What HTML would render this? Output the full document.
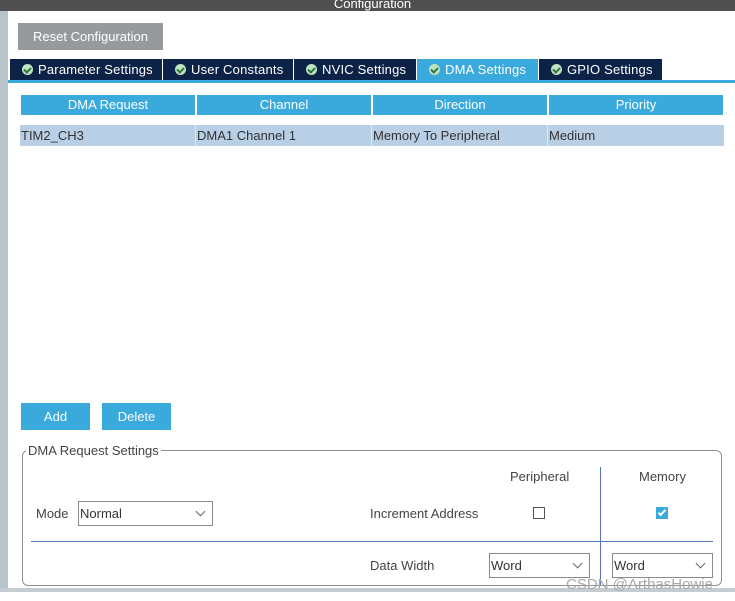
<!DOCTYPE html>
<html><head><style>
*{box-sizing:border-box;margin:0;padding:0}
body{width:735px;height:601px;background:#fff;position:relative;overflow:hidden;font-family:"Liberation Sans",Arial,sans-serif;font-size:13px;color:#333}
.a{position:absolute}
.tab{position:absolute;top:59px;height:21px;background:#0c2347;color:#fff;line-height:21px;padding-left:28px;font-size:13px;letter-spacing:.2px}
.tab i{position:absolute;left:12px;top:5px;width:11px;height:11px;border-radius:50%;background:#bfe3c0}
.tab i:after{content:"";position:absolute;left:3px;top:2px;width:3px;height:5px;border:solid #2a7a40;border-width:0 2px 2px 0;transform:rotate(45deg)}
.th{position:absolute;top:95px;height:20px;background:#3aa9dc;color:#fff;text-align:center;line-height:20px}
.td{position:absolute;top:125px;height:20px;line-height:21px;color:#333;padding-left:0}
.btn{position:absolute;top:403px;height:27px;background:#3aa9dc;color:#fff;text-align:center;line-height:27px}
.sel{position:absolute;height:25px;border:1px solid #8a8a8a;background:#fff;line-height:24px;padding-left:1px;color:#333}
.sel:after{content:"";position:absolute;right:8px;top:6px;width:6px;height:6px;border:solid #666;border-width:0 1px 1px 0;transform:rotate(45deg)}
</style></head><body>
<div class="a" style="left:0;top:0;width:8px;height:592px;background:#b9c3ca"></div>
<div class="a" style="left:0;top:0;width:735px;height:11px;background:#505050;color:#fff;text-align:center;line-height:8px;font-size:13px;overflow:hidden;padding-left:10px">Configuration</div>
<div class="a" style="left:0;top:588px;width:735px;height:4px;background:#c5cbd0"></div>
<div class="a" style="left:18px;top:23px;width:145px;height:27px;background:#979a9d;color:#fff;line-height:27px;text-align:center">Reset Configuration</div>
<div class="tab" style="left:10px;width:152px"><i></i>Parameter Settings</div>
<div class="tab" style="left:163px;width:130px"><i></i>User Constants</div>
<div class="tab" style="left:294px;width:122px"><i></i>NVIC Settings</div>
<div class="tab" style="left:417px;width:121px;background:#3aa9dc"><i></i>DMA Settings</div>
<div class="tab" style="left:539px;width:123px"><i></i>GPIO Settings</div>
<div class="a" style="left:8px;top:80px;width:727px;height:3px;background:#3aa9dc"></div>
<div class="th" style="left:21px;width:174px">DMA Request</div>
<div class="th" style="left:197px;width:174px">Channel</div>
<div class="th" style="left:373px;width:174px">Direction</div>
<div class="th" style="left:549px;width:174px">Priority</div>
<div class="a" style="left:20px;top:125px;width:704px;height:21px;background:#b8cfe6"></div>
<div class="a" style="left:195px;top:125px;width:1px;height:21px;background:#e0e8f2"></div>
<div class="a" style="left:371px;top:125px;width:1px;height:21px;background:#e0e8f2"></div>
<div class="a" style="left:547px;top:125px;width:1px;height:21px;background:#e0e8f2"></div>
<div class="td" style="left:21px">TIM2_CH3</div>
<div class="td" style="left:197px">DMA1 Channel 1</div>
<div class="td" style="left:373px">Memory To Peripheral</div>
<div class="td" style="left:549px">Medium</div>
<div class="btn" style="left:21px;width:69px">Add</div>
<div class="btn" style="left:102px;width:69px">Delete</div>
<div class="a" style="left:22px;top:450px;width:700px;height:136px;border:1px solid #8f8f8f;border-radius:6px"></div>
<div class="a" style="left:26px;top:443px;background:#fff;padding:0 2px;line-height:16px;color:#444">DMA Request Settings</div>
<div class="a" style="left:600px;top:467px;width:1px;height:118px;background:#5577bb"></div>
<div class="a" style="left:31px;top:541px;width:682px;height:1px;background:#5577bb"></div>
<div class="a" style="left:510px;top:469px;color:#444">Peripheral</div>
<div class="a" style="left:639px;top:469px;color:#444">Memory</div>
<div class="a" style="left:36px;top:506px;color:#444">Mode</div>
<div class="sel" style="left:78px;top:501px;width:135px">Normal</div>
<div class="a" style="left:370px;top:506px;color:#444">Increment Address</div>
<div class="a" style="left:533px;top:507px;width:12px;height:12px;border:1px solid #555;background:#fff"></div>
<div class="a" style="left:656px;top:507px;width:12px;height:12px;background:#3aa9dc"><div class="a" style="left:4px;top:1px;width:4px;height:8px;border:solid #fff;border-width:0 2px 2px 0;transform:rotate(45deg)"></div></div>
<div class="a" style="left:370px;top:558px;color:#444">Data Width</div>
<div class="sel" style="left:489px;top:553px;width:101px">Word</div>
<div class="sel" style="left:612px;top:553px;width:101px">Word</div>
<div class="a" style="left:566px;top:576px;color:#a8a8a8;font-size:15px;line-height:17px">CSDN @ArthasHowie</div>
</body></html>
